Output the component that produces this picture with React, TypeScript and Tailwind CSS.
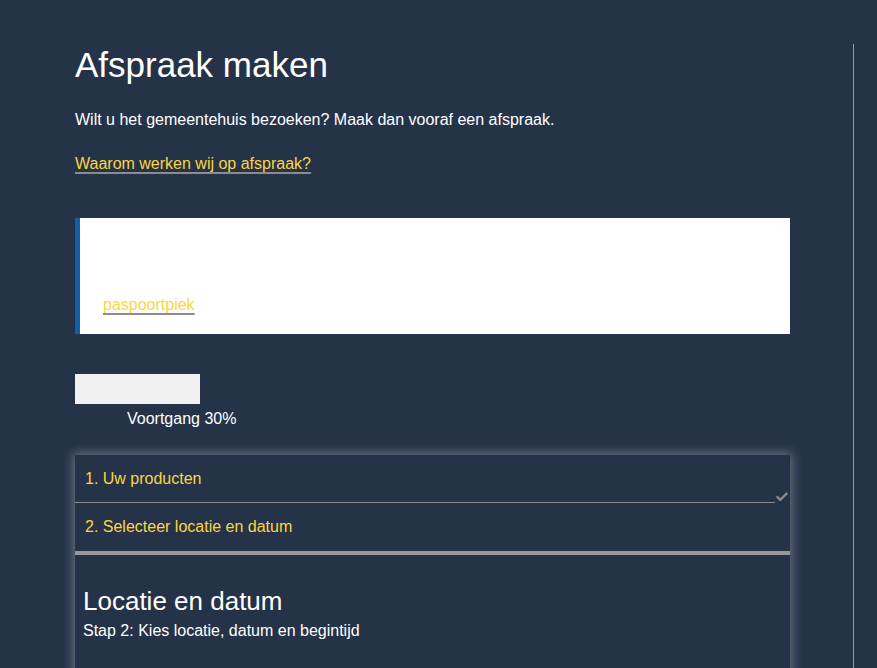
import { Check } from 'lucide-react';

export default function App() {
  return (
    <div
      className="min-h-[668px] h-[668px] overflow-hidden bg-[#253349] text-white"
      style={{ fontFamily: '"Liberation Sans", Arial, sans-serif' }}
    >
      <div className="flex">
        <main className="w-[853px] pl-[75px] pr-[63px] pt-[44px]">
          <h1 className="text-[35px] leading-[42px] font-normal">Afspraak maken</h1>
          <p className="mt-[24px] text-[16px] leading-[20px]">
            Wilt u het gemeentehuis bezoeken? Maak dan vooraf een afspraak.
          </p>
          <p className="mt-[24px] text-[16px] leading-[20px]">
            <a href="#" className="text-[#fcd53f] underline decoration-[#8c8c8c] decoration-2 underline-offset-[3px]">
              Waarom werken wij op afspraak?
            </a>
          </p>

          {/* melding */}
          <div className="mt-[44px] h-[116px] bg-white border-l-[5px] border-[#105fa8] pl-[23px] pt-[75px]">
            <a href="#" className="text-[16px] leading-[20px] text-[#fcd53f] underline decoration-[#8c8c8c] decoration-2 underline-offset-[3px]">
              paspoortpiek
            </a>
          </div>

          {/* voortgang */}
          <div className="mt-[40px] h-[30px] w-[125px] bg-[#f1f1f1]" />
          <div className="pl-[52px] pt-[5px] text-[16px] leading-[20px]">Voortgang 30%</div>

          {/* stappen */}
          <div className="mt-[26px] shadow-[0_0_10px_2px_rgba(190,190,190,0.45)]">
            <div className="relative flex h-[48px] items-center pl-[10px] pr-[15px] text-[16px] text-[#fcd53f]">
              <span>1. Uw producten</span>
              <div className="absolute bottom-0 left-0 right-[15px] h-px bg-[#8c8c8c]" />
              <Check
                size={14}
                strokeWidth={4}
                className="absolute right-[1px] bottom-[-1px] text-[#8c8c8c]"
              />
            </div>
            <div className="flex h-[52px] items-center pl-[10px] text-[16px] text-[#fcd53f] border-b-[4px] border-[#999999]">
              <span>2. Selecteer locatie en datum</span>
            </div>
            <div className="px-[8px] pt-[31px] pb-[40px]">
              <h2 className="text-[26px] leading-[30px] font-normal">Locatie en datum</h2>
              <p className="mt-[5px] text-[16px] leading-[20px]">Stap 2: Kies locatie, datum en begintijd</p>
            </div>
          </div>
        </main>
        <div className="mt-[44px] w-px h-[624px] bg-[#9a9a9a]" />
      </div>
    </div>
  );
}
